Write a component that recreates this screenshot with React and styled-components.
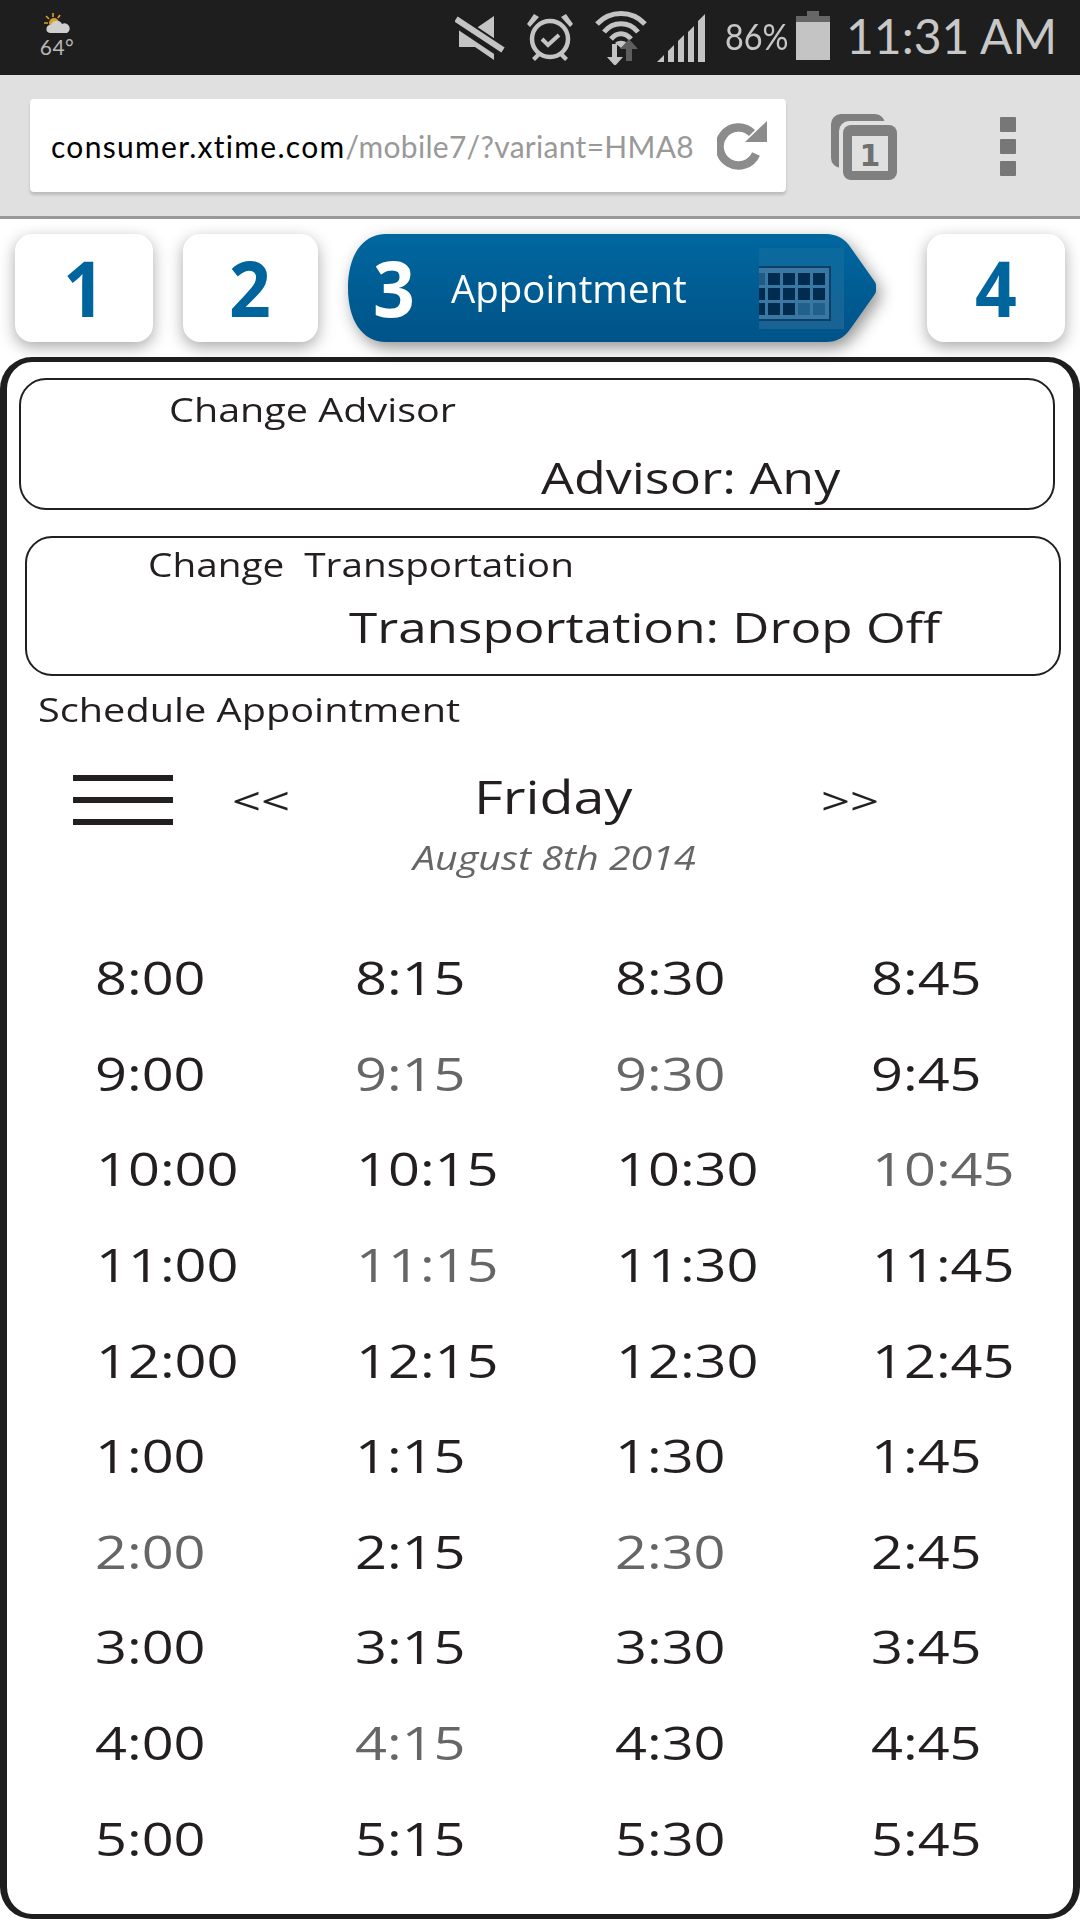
import React from "react";
import styled, { createGlobalStyle, css } from "styled-components";

const Global = createGlobalStyle`
  html, body { margin: 0; padding: 0; width: 1080px; height: 1920px; background: #fff; overflow: hidden; }
  #root { width: 1080px; height: 1920px; }
  * { box-sizing: border-box; }
`;

const Page = styled.div`
  width: 1080px; height: 1920px; background: #fff; display: flex; flex-direction: column;
  font-family: "Open Sans", "Noto Sans", sans-serif; color: #231f20;
`;

/* status bar */
const StatusBar = styled.div`
  height: 75px; background: #1e1e1e; display: flex; align-items: flex-start; flex: none; color: #c6c6c6;
  font-family: Lato, "Open Sans", sans-serif;
`;
const Weather = styled.div`
  width: 36px; margin: 12px 0 0 39px; display: flex; flex-direction: column; align-items: center;
`;
const Temp = styled.span`
  font-size: 21px; line-height: 24px; margin-top: 1px; color: #b8b8b8; letter-spacing: 0.5px;
  display: block;
`;
const StatusIcons = styled.div`
  margin-left: 380px; display: flex; align-items: flex-start; padding-top: 9px;
`;
const StatusIcon = styled.svg`
  display: block; flex: none; margin-left: ${p => p.$ml || 0}px; margin-top: ${p => p.$mt || 0}px;
`;
const Percent = styled.span`
  font-size: 36px; line-height: 44px; margin: 5px 0 0 19px; width: 62px; white-space: nowrap; display: block;
  transform: scaleX(0.9); transform-origin: left center;
`;
const Clock = styled.span`
  font-size: 48px; line-height: 54px; margin: 0 0 0 16px; white-space: nowrap; display: block;
  color: #c8c8c8;
`;

/* browser toolbar */
const Toolbar = styled.div`
  height: 144px; flex: none; background: #e0e0e0; border-bottom: 3px solid #999;
  display: flex; align-items: flex-start; padding: 24px 0 0 30px;
`;
const UrlBox = styled.div`
  width: 756px; height: 93px; background: #fff; border-radius: 4px; box-shadow: 0 3px 3px rgba(0,0,0,.16);
  display: flex; align-items: center; padding-left: 21px; flex: none;
`;
const UrlText = styled.div`
  width: 643px; overflow: hidden; white-space: nowrap; font-family: Lato, "Open Sans", sans-serif; font-size: 30px;
  line-height: 40px; color: #999; letter-spacing: 0.3px;
  b { font-weight: 400; color: #000; letter-spacing: 1.3px; }
`;
const Reload = styled.svg` display: block; margin-left: 23px; flex: none; `;
const Tabs = styled.svg` display: block; margin: 15px 0 0 44px; flex: none; `;
const Dots = styled.div`
  margin: 18px 0 0 102px; width: 16px; display: flex; flex-direction: column; gap: 7px; flex: none;
`;
const Dot = styled.span` display: block; height: 15px; background: #777; border-radius: 1px; `;

/* steps */
const Steps = styled.div` display: flex; padding: 15px 0 0 15px; flex: none; height: 123px; `;
const StepBox = styled.div`
  width: ${p => p.$w}px; height: 108px; margin-right: ${p => p.$mr || 0}px; background: #fff; border-radius: 17px;
  box-shadow: 0 5px 16px rgba(0,0,0,.34); flex: none; display: flex; align-items: center; justify-content: center;
`;
const stepNum = css`
  font-weight: 700; font-size: 77px; line-height: 108px; display: block;
`;
const StepNum = styled.span` ${stepNum} color: #00659c; transform: scaleX(.95); `;
const ActiveWrap = styled.div`
  width: 528px; height: 108px; margin-right: 51px; flex: none; filter: drop-shadow(4px 6px 8px rgba(0,0,0,.42));
`;
const ActiveStep = styled.div`
  width: 528px; height: 108px; display: flex; align-items: center; padding-left: 24px; color: #fff;
  background: linear-gradient(#00679f, #005388);
  clip-path: path("M38 0 H478 Q494 0 503 14 L527 48 Q530 54 527 60 L503 94 Q494 108 478 108 H38 C14 108 0 86 0 54 C0 22 14 0 38 0 Z");
`;
const ActiveNum = styled.span` ${stepNum} color: #fff; transform: scaleX(.95); `;
const ActiveLabel = styled.span`
  font-size: 39px; line-height: 50px; margin-left: 35px; white-space: nowrap; width: 308px; flex: none;
  display: block; transform: scaleX(.985); transform-origin: left center;
`;
const Calendar = styled.svg` display: block; flex: none; `;

/* panel */
const Panel = styled.div`
  height: 1562px; margin-top: 15px; border: solid #1e1e1e; border-width: 5px 7px; border-radius: 32px; padding-top: 16px; flex: none;
  overflow: hidden;
`;
const stretched = css`
  display: block; white-space: nowrap; width: fit-content; transform-origin: left center;
  transform: scaleX(${p => p.$sx || 1.21});
`;
const Card = styled.div`
  margin-left: ${p => p.$ml}px; margin-top: ${p => p.$mt || 0}px; width: 1036px; height: ${p => p.$h}px;
  border: 2px solid #231f20; border-radius: 27px; padding-top: ${p => p.$pt}px;
`;
const Small = styled.span`
  ${stretched} font-size: 32px; line-height: 40px; margin-left: ${p => p.$ml}px; margin-top: ${p => p.$mt || 0}px;
`;
const Big = styled.span`
  ${stretched} font-size: ${p => p.$size}px; line-height: 50px; margin-left: ${p => p.$ml}px; margin-top: ${p => p.$mt}px;
`;
const DayHeader = styled.div` display: flex; align-items: flex-start; margin: 45px 0 0 66px; height: 63px; `;
const Menu = styled.div`
  width: 100px; height: 50px; display: flex; flex-direction: column; justify-content: space-between; flex: none;
`;
const MenuBar = styled.span` display: block; height: 6px; background: #231f20; `;
const Nav = styled.span`
  ${stretched} font-size: 38px; line-height: 50px; margin-left: ${p => p.$ml}px; width: ${p => p.$w}px; flex: none; margin-top: 0;
`;
const Day = styled.span`
  ${stretched} font-size: 46px; line-height: 60px; margin-top: -9px; margin-left: ${p => p.$ml}px; width: 131px; flex: none;
`;
const DateText = styled.span`
  ${stretched} font-size: 32px; line-height: 40px; font-style: italic; color: #666; margin-left: 406px;
`;
const Times = styled.div`
  display: grid; grid-template-columns: 260px 260px 256px 200px; grid-auto-rows: 95.65px; padding-left: 88px; margin-top: 52px;
`;
const Time = styled.span`
  ${stretched} font-size: 46px; line-height: 95.65px; color: ${p => (p.$off ? "#666" : "#231f20")};
  margin-left: ${p => (p.$wide ? 1 : 0)}px;
`;

const hours = ["8", "9", "10", "11", "12", "1", "2", "3", "4", "5"];
const mins = ["00", "15", "30", "45"];
const off = new Set(["9:15", "9:30", "10:45", "11:15", "2:00", "2:30", "4:15"]);

const L = "#c4c4c4";
const BG = "#1e1e1e";

const cells = [];
[0, 1, 2].forEach(r => {
  [-9, 0, 15, 30, 45].forEach((x, c) => {
    const lit = (r === 2 && c >= 3);
    cells.push(
      <rect key={r + "-" + c} x={(c === 0 ? 0 : 9 + x)} y={25 + r * 15} width={c === 0 ? 6 : 12} height={12}
        fill={lit ? "#22608c" : r === 0 && c === 0 ? "#225a84" : "#012c4f"} />
    );
  });
});

export default function App() {
  return (
    <Page>
      <Global />
      <StatusBar>
        <Weather>
          <StatusIcon width="28" height="22" viewBox="0 0 28 22">
            <g stroke="#d9a02e" strokeWidth="1.6">
              <path d="M10 1v4M3 4l3 3M1 11h4M17 3l-2 3" />
            </g>
            <circle cx="11" cy="11" r="5" fill="#d9a02e" />
            <path d="M7 21a4 4 0 0 1 1-8 6 6 0 0 1 11-1 5 5 0 0 1 5 9z" fill="#cfcfcf" />
          </StatusIcon>
          <Temp>64°</Temp>
        </Weather>
        <StatusIcons>
          <StatusIcon width="50" height="50" viewBox="0 0 50 50" $mt="4">
            <path d="M4 16H20L39 3V47L20 34H4Z" fill={L} />
            <path d="M0 7L48 39" stroke={BG} strokeWidth="13" />
            <path d="M1 6L48 37" stroke={L} strokeWidth="6" />
          </StatusIcon>
          <StatusIcon width="50" height="50" viewBox="0 0 50 50" $ml="20" $mt="3">
            <circle cx="25" cy="27" r="18" fill="none" stroke={L} strokeWidth="4.5" />
            <path d="M17 27l6 6 11-10" fill="none" stroke={L} strokeWidth="4" />
            <path d="M2 12L9 2l5 3-9 10zM48 12L41 2l-5 3 9 10z" fill={L} />
            <path d="M12 41l-5 5 3 3 5-5zM38 41l5 5-3 3-5-5z" fill={L} />
          </StatusIcon>
          <StatusIcon width="52" height="56" viewBox="0 0 52 56" $ml="20">
            <g fill="none" stroke={L} strokeWidth="5">
              <path d="M2 15C15 1 37 1 50 15" />
              <path d="M9 23C18 12 34 12 43 23" />
              <path d="M16 30C22 23 30 23 36 30" />
            </g>
            <path d="M20 34C23 31 29 31 32 34L26 39Z" fill={L} />
            <path d="M17 35h5v13h6l-8 9-8-9h5z" fill={L} />
            <path d="M31 52V40h-6l9-10 9 10h-6v12z" fill="#5e5e5e" />
          </StatusIcon>
          <StatusIcon width="50" height="50" viewBox="0 0 50 50" $ml="9" $mt="4">
            <path d="M1 49L8 42V49ZM12 38L18 32V49H12ZM22 28L28 22V49H22ZM32 19L38 13V49H32ZM42 8L49 1V49H42Z" fill={L} />
          </StatusIcon>
          <Percent>86%</Percent>
          <StatusIcon width="34" height="49" viewBox="0 0 34 49" $ml="9" $mt="2">
            <path d="M11 0H23V5H34V11H0V5H11Z" fill="#666" />
            <rect x="0" y="11" width="34" height="38" fill={L} />
          </StatusIcon>
          <Clock>11:31 AM</Clock>
        </StatusIcons>
      </StatusBar>

      <Toolbar>
        <UrlBox>
          <UrlText><b>consumer.xtime.com</b>/mobile7/?variant=HMA8</UrlText>
          <Reload width="50" height="50" viewBox="0 0 50 50">
            <path d="M35 12A19 19 0 1 0 39 33" fill="none" stroke="#8c8c8c" strokeWidth="8.5" />
            <path d="M50 0V21H28Z" fill="#8c8c8c" />
          </Reload>
        </UrlBox>
        <Tabs width="68" height="66" viewBox="0 0 68 66">
          <rect x="1" y="0" width="54" height="54" rx="10" fill="#7f7f7f" />
          <rect x="9" y="7" width="58" height="59" rx="10" fill="#e0e0e0" />
          <rect x="13" y="11" width="54" height="55" rx="8" fill="#7f7f7f" />
          <rect x="22" y="22" width="36" height="35" fill="#e0e0e0" />
          <text x="40" y="52" textAnchor="middle" fontSize="30" fontWeight="700" fill="#707070" fontFamily="'DejaVu Sans', sans-serif">1</text>
        </Tabs>
        <Dots><Dot /><Dot /><Dot /></Dots>
      </Toolbar>

      <Steps>
        <StepBox $w={138} $mr={30}><StepNum>1</StepNum></StepBox>
        <StepBox $w={135} $mr={30}><StepNum>2</StepNum></StepBox>
        <ActiveWrap>
          <ActiveStep>
            <ActiveNum>3</ActiveNum>
            <ActiveLabel>Appointment</ActiveLabel>
            <Calendar width="85" height="81" viewBox="0 0 85 81">
              <defs>
                <linearGradient id="calbg" x1="0" y1="0" x2="0" y2="1">
                  <stop offset="0" stopColor="#0a6a9e" />
                  <stop offset="1" stopColor="#1a6394" />
                </linearGradient>
              </defs>
              <rect width="85" height="81" fill="url(#calbg)" />
              <rect x="0" y="18" width="72" height="55" fill="#0e3f66" />
              <rect x="0" y="20" width="70" height="51" fill="#3a78a4" />
              {cells}
            </Calendar>
          </ActiveStep>
        </ActiveWrap>
        <StepBox $w={138}><StepNum>4</StepNum></StepBox>
      </Steps>

      <Panel>
        <Card $ml={12} $h={132} $pt={10}>
          <Small $ml={148} $sx={1.235}>Change Advisor</Small>
          <Big $ml={520} $mt={23} $size={43}>Advisor: Any</Big>
        </Card>
        <Card $ml={18} $mt={26} $h={140} $pt={7}>
          <Small $ml={121}>Change&nbsp;&nbsp;Transportation</Small>
          <Big $ml={322} $mt={17} $size={42.5} $sx={1.205}>Transportation: Drop Off</Big>
        </Card>
        <Small $ml={31} $mt={14} $sx={1.24}>Schedule Appointment</Small>
        <DayHeader>
          <Menu><MenuBar /><MenuBar /><MenuBar /></Menu>
          <Nav $ml={59} $w={54} $sx={1.34}>&lt;&lt;</Nav>
          <Day $ml={188}>Friday</Day>
          <Nav $ml={216} $w={54} $sx={1.34}>&gt;&gt;</Nav>
        </DayHeader>
        <DateText $sx={1.232}>August 8th 2014</DateText>
        <Times>
          {hours.map(h => mins.map(m => {
            const t = `${h}:${m}`;
            return <Time key={t} $off={off.has(t)} $wide={h.length > 1} $sx={1.215}>{t}</Time>;
          }))}
        </Times>
      </Panel>
    </Page>
  );
}
